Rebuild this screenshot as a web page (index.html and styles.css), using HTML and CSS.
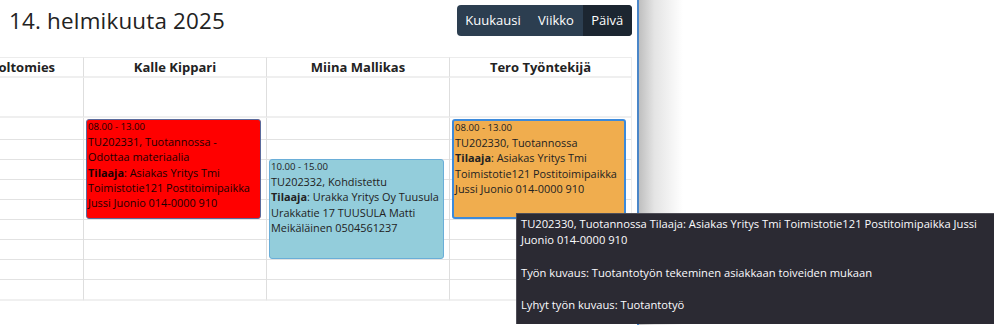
FILE: index.html
```html
<!DOCTYPE html>
<html lang="fi">
<head>
    <meta charset="UTF-8">
    <meta name="viewport" content="width=device-width, initial-scale=1.0">
    <title>Kalenteri</title>
    <link rel="stylesheet" href="styles.css">
</head>
<body>
    <div class="page">
        <div class="panel">
            <div class="toolbar">
                <h2 class="title">14. helmikuuta 2025</h2>
                <div class="btn-group">
                    <button class="btn">Kuukausi</button>
                    <button class="btn">Viikko</button>
                    <button class="btn active">Päivä</button>
                </div>
            </div>

            <div class="calendar">
                <div class="cal-grid">
                    <div class="col-head">Huoltomies</div>
                    <div class="col-head">Kalle Kippari</div>
                    <div class="col-head">Miina Mallikas</div>
                    <div class="col-head">Tero Työntekijä</div>

                    <div class="allday"></div>
                    <div class="allday"></div>
                    <div class="allday"></div>
                    <div class="allday"></div>

                    <div class="slots"></div>
                    <div class="slots">
                        <div class="event event-red" style="grid-row: 1 / 6;">
                            <div class="ev-time">08.00 - 13.00</div>
                            <div class="ev-body">TU202331, Tuotannossa - Odottaa materiaalia<br><b>Tilaaja</b>: Asiakas Yritys Tmi Toimistotie121 Postitoimipaikka Jussi Juonio 014-0000 910</div>
                        </div>
                    </div>
                    <div class="slots">
                        <div class="event event-blue" style="grid-row: 3 / 8;">
                            <div class="ev-time">10.00 - 15.00</div>
                            <div class="ev-body">TU202332, Kohdistettu<br><b>Tilaaja</b>: Urakka Yritys Oy Tuusula Urakkatie 17 TUUSULA Matti Meikäläinen 0504561237</div>
                        </div>
                    </div>
                    <div class="slots">
                        <div class="event event-orange selected" style="grid-row: 1 / 6;">
                            <div class="ev-time">08.00 - 13.00</div>
                            <div class="ev-body">TU202330, Tuotannossa<br><b>Tilaaja</b>: Asiakas Yritys Tmi Toimistotie121 Postitoimipaikka Jussi Juonio 014-0000 910</div>
                        </div>
                    </div>
                </div>
            </div>
        </div>
        <div class="shade"></div>
    </div>

    <!-- hover tooltip of the selected event -->
    <div class="tooltip">TU202330, Tuotannossa Tilaaja: Asiakas Yritys Tmi Toimistotie121 Postitoimipaikka Jussi Juonio 014-0000 910

Työn kuvaus: Tuotantotyön tekeminen asiakkaan toiveiden mukaan

Lyhyt työn kuvaus: Tuotantotyö</div>
</body>
</html>
```

FILE: styles.css
```css
html, body {
    overflow: hidden;
}
body {
    font-family: "Open Sans", "Noto Sans", sans-serif;
    color: #222;
    margin: 0;
    background: #fff;
    height: 325px;
}
.page {
    display: flex;
    height: 100%;
}
.panel {
    width: 637px;
    border-right: 2px solid #4a86c8;
    background: #fff;
    flex-shrink: 0;
}
.shade {
    width: 44px;
    background: linear-gradient(to right, #bfbfbf, #e4e4e4 35%, #fff);
}

/* toolbar */
.toolbar {
    display: flex;
    justify-content: space-between;
    align-items: flex-start;
    padding: 5px 5px 0 9px;
    height: 57px;
    box-sizing: border-box;
}
.title {
    margin: 0;
    font-size: 22.4px;
    font-weight: 400;
    letter-spacing: 0.2px;
    line-height: 32px;
    color: #222;
}
.btn-group {
    display: flex;
    background-color: #2c3e50;
    border-radius: 4px;
    overflow: hidden;
}
.btn {
    font-family: inherit;
    font-size: 13px;
    line-height: 31px;
    height: 31px;
    padding: 0 8.7px;
    border: none;
    background: transparent;
    color: #fff;
    cursor: pointer;
}
.btn.active {
    background-color: #1c2631;
}

/* calendar */
.calendar {
    width: 633px;
    overflow: hidden;
}
.cal-grid {
    display: grid;
    grid-template-columns: 132px 183px 183px 183px;
    margin-left: -49px;
}
.col-head,
.allday,
.slots {
    border-left: 1px solid #dedede;
}
.col-head:nth-child(4),
.allday:nth-child(8),
.slots:last-child {
    border-right: 1px solid #ececec;
}
.col-head {
    height: 21px;
    box-sizing: border-box;
    border-top: 1px solid #ececec;
    border-bottom: 2px solid #efefef;
    font-size: 13px;
    font-weight: 700;
    line-height: 18px;
    text-align: center;
    white-space: nowrap;
}
.allday {
    height: 40px;
    box-sizing: border-box;
    border-bottom: 2px solid #efefef;
}
.slots {
    display: grid;
    grid-template-rows: repeat(9, 20px);
    padding-top: 1px;
    border-bottom: 2px solid #f0f0f0;
    background: repeating-linear-gradient(#e2e2e2 0 1px, transparent 1px 20px) 0 21px / 100% 160px no-repeat;
}

/* events */
.event {
    grid-column: 1;
    margin: 0 5px 0 2px;
    border: 1px solid #5a6a9c;
    border-radius: 3px;
    padding: 0 2px 0 1px;
    overflow: hidden;
    color: #222;
}
.event-red {
    background-color: #ff0000;
    color: #1a0000;
}
.event-blue {
    background-color: #93cddb;
    border-color: #6aaed8;
}
.event-orange {
    background-color: #f0ad4e;
}
.event.selected {
    border: 2px solid #3c8adb;
}
.ev-time {
    font-size: 9.6px;
    line-height: 14px;
    white-space: nowrap;
}
.ev-body {
    font-size: 10.9px;
    line-height: 15.3px;
}

/* tooltip */
.tooltip {
    position: absolute;
    left: 516px;
    top: 213px;
    width: 470px;
    height: 106px;
    padding: 2px 4px;
    background-color: #2b2a33;
    border: 1px solid #4f4e57;
    border-bottom: 0;
    color: #fbfbfe;
    font-family: "Open Sans", sans-serif;
    font-size: 11.2px;
    line-height: 16.2px;
    white-space: pre-line;
}
```
